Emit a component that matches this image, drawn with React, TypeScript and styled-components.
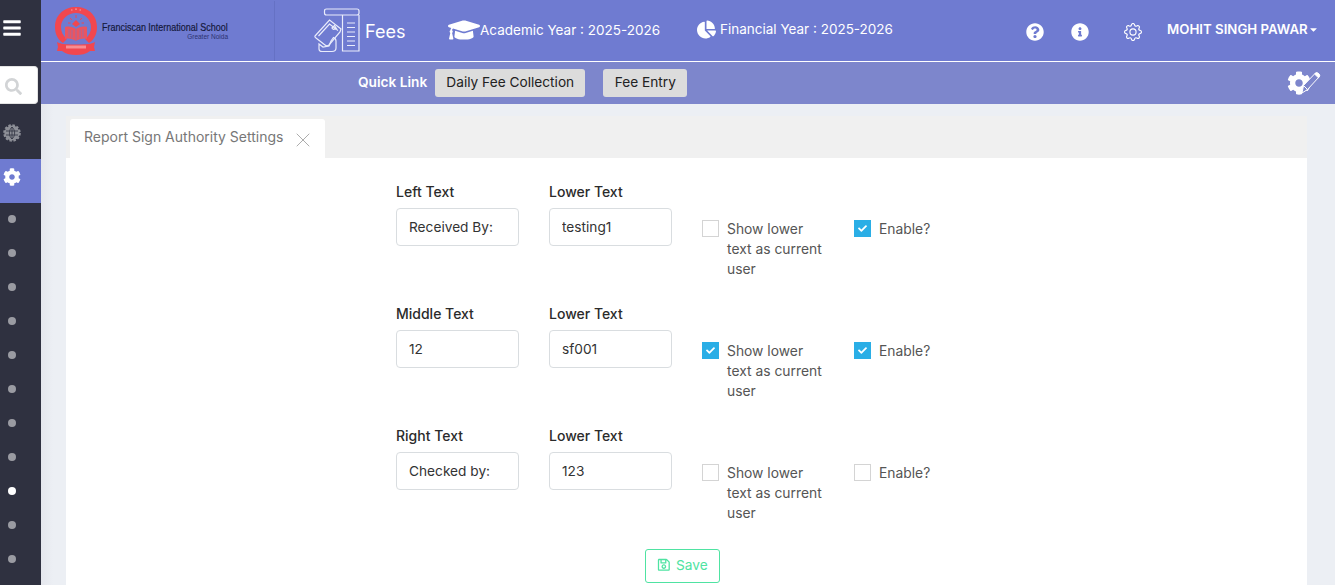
import React from 'react';
import styled, { createGlobalStyle } from 'styled-components';
import { FaBars, FaChartPie, FaCog, FaGraduationCap, FaInfoCircle, FaQuestionCircle, FaRegSave, FaSearch, FaCheck, FaCaretDown } from 'react-icons/fa';
import { BsGear } from 'react-icons/bs';
import { X } from 'lucide-react';

const FONT = `Inter, Roboto, "Liberation Sans", sans-serif`;

const Global = createGlobalStyle`
  html, body { margin: 0; padding: 0; height: 100%; overflow: hidden; background: #eceff4; }
  * { box-sizing: border-box; }
  body { font-family: ${FONT}; font-size: 14px; color: #333; }
`;

const Page = styled.div`display: flex; width: 1335px; height: 585px; overflow: hidden;`;
const Sidebar = styled.aside`width: 41px; flex: none; background: #2f3140; display: flex; flex-direction: column; color: #fff;`;
const Burger = styled.div`height: 56px; padding: 18px 0 0 2px; font-size: 20px; line-height: 0;`;
const SearchBox = styled.div`
  width: 38px; height: 38px; margin-top: 10px; background: #fff; border: 1px solid #e3e3e3; border-left: 0; border-radius: 0 4px 4px 0;
  display: flex; align-items: center; justify-content: center; padding: 3px 10px 0 0; color: #d2d4d6; font-size: 17px;
`;
const NavIcon = styled.div<{ $active?: boolean }>`
  height: 44px; display: flex; align-items: center; padding: 0 0 8px 3px; font-size: 18px;
  background: ${p => (p.$active ? '#6f7bd1' : 'transparent')};
  color: ${p => (p.$active ? '#fff' : '#8d8f97')};
`;
const GlobeSlot = styled(NavIcon)`margin-top: 11px;`;
const DotList = styled.div`display: flex; flex-direction: column; padding: 12px 0 0 8px; gap: 26px;`;
const Dot = styled.span<{ $active?: boolean }>`width: 8px; height: 8px; border-radius: 50%; background: ${p => (p.$active ? '#fff' : '#9a9ba2')};`;

const Main = styled.div`flex: 1; min-width: 0; display: flex; flex-direction: column; background: linear-gradient(90deg, #e5e7ed 0, #eceff4 12px);`;
const Header = styled.header`height: 61px; flex: none; background: #6f7bd1; display: flex; align-items: center; color: #fff;`;
const Brand = styled.div`width: 234px; height: 60px; flex: none; border-right: 1px solid #6571c4; display: flex; align-items: center; padding: 0 0 0 13px; gap: 4px;`;
const BrandText = styled.div`display: flex; flex-direction: column; align-items: flex-end; width: 126px; color: #14183a; padding-top: 1px; overflow: visible;`;
const BrandName = styled.span`display: block; width: 126px; font-family: "Liberation Sans", sans-serif; font-size: 11.5px; line-height: 12px; font-weight: 400; -webkit-text-stroke: .2px #14183a; white-space: nowrap; transform: scaleX(.78); transform-origin: left center;`;
const BrandSub = styled.span`font-family: "Liberation Sans", sans-serif; font-size: 6.5px; line-height: 8px; color: #2c3270; white-space: nowrap;`;
const Module = styled.div`display: flex; align-items: center; margin-left: 39px; gap: 5px; font-size: 18px; font-weight: 400; width: 134px; flex: none; padding-top: 1px;`;
const YearItem = styled.div<{ $w: number }>`display: flex; align-items: center; flex: none; width: ${p => p.$w}px; font-size: 13.5px; white-space: nowrap;`;
const CapIcon = styled.span`display: flex; font-size: 32px; margin-top: -1px;`;
const PieIcon = styled.span`display: flex; font-size: 19px; margin-right: 4px; margin-top: -2px;`;
const YearLabel = styled.span<{ $up?: boolean }>`position: relative; top: ${p => (p.$up ? '-2px' : '-1px')};`;
const HeaderIcons = styled.div`display: flex; align-items: center; margin-left: 133px; font-size: 18px;`;
const HeaderIcon = styled.span<{ $gap: number }>`display: flex; margin-right: ${p => p.$gap}px; margin-top: 2px;`;
const UserName = styled.div`display: flex; align-items: center; font-weight: 600; font-size: 13.25px; white-space: nowrap; margin-top: -3px;`;

const SubBar = styled.div`height: 43px; flex: none; border-top: 1px solid #fff; background: #7d86cc; display: flex; align-items: center; padding-left: 317px; position: relative; color: #fff;`;
const QuickLabel = styled.span`font-weight: 600; font-size: 13.7px; margin-right: 8px; white-space: nowrap; padding-bottom: 3px;`;
const QuickButton = styled.button<{ $w: number }>`height: 28px; border: 0; background: #dcdcdc; border-radius: 3px; font: 400 13.7px ${FONT}; color: #222; margin-right: 18px; padding: 0 0 3px; width: ${p => p.$w}px;`;
const BarTool = styled.span`margin-left: auto; margin-right: 14px; width: 34px; height: 26px; position: relative; display: block;`;
const ToolGear = styled.span`position: absolute; left: 0; top: 1px; font-size: 24px; display: flex;`;
const ToolPen = styled.span`position: absolute; left: 13px; top: 1px; display: flex;`;

const Content = styled.div`flex: 1; padding: 12px 28px 0 25px; min-height: 0;`;
const TabStrip = styled.div`height: 42px; background: #f0f0f0; padding: 3px 0 0 4px; display: flex; align-items: flex-end;`;
const Tab = styled.div`width: 255px; height: 39px; background: #fff; border-radius: 3px 3px 0 0; display: flex; align-items: center; padding: 0 10px 4px 14px; color: #777; font-size: 14px; justify-content: space-between; white-space: nowrap;`;
const TabClose = styled.span`display: flex; color: #888; margin-top: 6px;`;
const Panel = styled.div`background: #fff; height: 427px; padding: 26px 0 0 330px;`;
const FormRow = styled.div`display: grid; grid-template-columns: 123px 123px 122px 100px; column-gap: 30px; height: 122px;`;
const Field = styled.div`display: flex; flex-direction: column;`;
const FieldLabel = styled.label`font-weight: 500; font-size: 14px; line-height: 16px; color: #2b2b2b; margin-bottom: 8px;`;
const TextBox = styled.input`width: 123px; height: 38px; border: 1px solid #d9dde0; border-radius: 4px; padding: 0 12px 0; font: 400 13.7px ${FONT}; color: #333; outline: 0; background: #fff;`;
const CheckField = styled.div`display: flex; align-items: flex-start; padding-top: 35px; gap: 8px; color: #555; font-size: 13.85px; line-height: 20px;`;
const Box = styled.span<{ $on?: boolean }>`
  width: 17px; height: 17px; flex: none; margin-top: 1px; display: flex; align-items: center; justify-content: center; color: #fff; font-size: 9px;
  background: ${p => (p.$on ? '#2aaee6' : '#fff')}; border: 1px solid ${p => (p.$on ? '#2aaee6' : '#d4d4d4')};
`;
const Actions = styled.div`margin: -1px 0 0 249px;`;
const SaveButton = styled.button`width: 75px; height: 34px; background: #fff; border: 1px solid #4fe3a2; border-radius: 3px; color: #4fe3a2; font: 400 13.7px ${FONT}; display: flex; align-items: center; justify-content: center; gap: 5px; padding: 0 0 3px;`;

const Logo = () => (
  <svg width="44" height="50" viewBox="0 0 44 50" fill="none" aria-hidden>
    <path d="M9 37 C3 33 1 27 1 21 C1 9 10 1 22 1 C34 1 43 9 43 21 C43 27 41 33 35 37 L31 33 C35 30 37 26 37 21 C37 13 30 7 22 7 C14 7 7 13 7 21 C7 26 9 30 13 33 Z" fill="#f2474f" />
    <path d="M5 37 C10 39 34 39 39 37 L41 36 L40 41 L41 45 H36 C32 48 27 49 22 49 C17 49 12 48 8 45 H3 L4 41 L3 36 Z" fill="#f2474f" />
    <rect x="12" y="39.5" width="20" height="3" fill="#f78e92" />
    <path d="M11 21 C15 20 19 21 22 23 C25 21 29 20 33 21 V33 C29 32 25 33 22 35 C19 33 15 32 11 33 Z" fill="#ea5560" />
    <path d="M22 23 V35 M15 23 V31 M18 24 V32 M26 24 V32 M29 23 V31" stroke="#8e6fb4" strokeWidth=".8" />
    <path d="M22 21 L26 18 L22 14 L18 18 Z" fill="#f2474f" />
    <path d="M22 9 V12 M16 12 L18 14 M28 12 L26 14 M14 17 H16.5 M30 17 H27.5" stroke="#f2474f" strokeWidth="1" />
    <path d="M17 4 h1.5 M21.2 3.2 h1.6 M25.5 4 h1.5" stroke="#f7a0a4" strokeWidth="1.2" />
  </svg>
);

const FeesIcon = () => (
  <svg width="46" height="46" viewBox="0 0 46 46" fill="none" stroke="#e9ecfb" strokeWidth="1.2" aria-hidden>
    <path d="M12.5 1 H43 Q45 1 45 3 V5 Q45 7 43 7 H12.5 Q10.5 7 10.5 5 V3 Q10.5 1 12.5 1 Z" />
    <path d="M28.5 7 V43 H45 V7" />
    <path d="M33 15 H41 M33 19.5 H41 M33 24 H41 M33 28.5 H41 M33 33 H41 M33 37.5 H41" />
    <path d="M1 28 L15.5 12 L27 21 L26 24 L15 37 Q13 38.5 11 37 L2 30 Q0.5 29 1 28 Z" />
    <path d="M4.5 28 L15.5 16 L24 22.5 M18 20 l2.5 -2.5 l2 3.2 l-3.2 .6 z" />
    <path d="M5 36 V41 Q5 43.5 8 43.5 H18 Q22 43.5 22 40 V33 Q22 30.5 19.5 29.5 L17 33 L15 38 L9 39 Z" />
  </svg>
);

const GlobeGear = () => (
  <svg width="18" height="18" viewBox="0 0 18 18" aria-hidden>
    <circle cx="9" cy="9" r="7.6" fill="#8d8f97" stroke="#8d8f97" strokeWidth="2.4" strokeDasharray="2.4 1.6" />
    <circle cx="9" cy="9" r="6.3" fill="#8d8f97" />
    <path d="M3 7 H15 M3 11 H15 M9 3 V15 M9 3 C5.5 6 5.5 12 9 15 M9 3 C12.5 6 12.5 12 9 15" stroke="#2f3140" strokeWidth=".8" fill="none" />
  </svg>
);

const PenOutline = () => (
  <svg width="21" height="24" viewBox="0 0 21 24" aria-hidden>
    <path d="M3.5 14.5 L15 2.5 Q16.5 1 18.5 2.5 Q20.5 4.5 19 6 L7.5 18.5 L2 22 Z" fill="#7d86cc" stroke="#fff" strokeWidth="1" strokeLinejoin="round" />
    <path d="M14.5 3 L15 2.5 Q16.5 1 18.5 2.5 Q20.5 4.5 19 6 L18.5 6.8 Z" fill="#fff" stroke="#fff" strokeWidth="1" />
    <path d="M3.5 14.5 L7.5 18.5" stroke="#fff" strokeWidth="1" />
  </svg>
);

type RowData = { label: string; value: string; lower: string; show: boolean; enable: boolean };
const rows: RowData[] = [
  { label: 'Left Text', value: 'Received By:', lower: 'testing1', show: false, enable: true },
  { label: 'Middle Text', value: '12', lower: 'sf001', show: true, enable: true },
  { label: 'Right Text', value: 'Checked by:', lower: '123', show: false, enable: false },
];

const Check = ({ on }: { on: boolean }) => <Box $on={on}>{on && <FaCheck />}</Box>;

export default function App() {
  return (
    <Page>
      <Global />
      <Sidebar>
        <Burger><FaBars /></Burger>
        <SearchBox><FaSearch /></SearchBox>
        <GlobeSlot><GlobeGear /></GlobeSlot>
        <NavIcon $active><FaCog /></NavIcon>
        <DotList>
          {Array.from({ length: 11 }, (_, i) => <Dot key={i} $active={i === 8} />)}
        </DotList>
      </Sidebar>
      <Main>
        <Header>
          <Brand>
            <Logo />
            <BrandText>
              <BrandName>Franciscan International School</BrandName>
              <BrandSub>Greater Noida</BrandSub>
            </BrandText>
          </Brand>
          <Module><FeesIcon />Fees</Module>
          <YearItem $w={249}><CapIcon><FaGraduationCap /></CapIcon><YearLabel>Academic Year : 2025-2026</YearLabel></YearItem>
          <YearItem $w={196}><PieIcon><FaChartPie /></PieIcon><YearLabel $up>Financial Year : 2025-2026</YearLabel></YearItem>
          <HeaderIcons>
            <HeaderIcon $gap={27}><FaQuestionCircle /></HeaderIcon>
            <HeaderIcon $gap={35}><FaInfoCircle /></HeaderIcon>
            <HeaderIcon $gap={25}><BsGear size={18} /></HeaderIcon>
          </HeaderIcons>
          <UserName>MOHIT SINGH PAWAR<FaCaretDown size={11} /></UserName>
        </Header>
        <SubBar>
          <QuickLabel>Quick Link</QuickLabel>
          <QuickButton $w={150}>Daily Fee Collection</QuickButton>
          <QuickButton $w={84}>Fee Entry</QuickButton>
          <BarTool>
            <ToolGear><FaCog /></ToolGear>
            <ToolPen><PenOutline /></ToolPen>
          </BarTool>
        </SubBar>
        <Content>
          <TabStrip>
            <Tab>Report Sign Authority Settings<TabClose><X size={24} strokeWidth={0.7} /></TabClose></Tab>
          </TabStrip>
          <Panel>
            {rows.map(r => (
              <FormRow key={r.label}>
                <Field>
                  <FieldLabel>{r.label}</FieldLabel>
                  <TextBox defaultValue={r.value} />
                </Field>
                <Field>
                  <FieldLabel>Lower Text</FieldLabel>
                  <TextBox defaultValue={r.lower} />
                </Field>
                <CheckField><Check on={r.show} /><span>Show lower text as current user</span></CheckField>
                <CheckField><Check on={r.enable} /><span>Enable?</span></CheckField>
              </FormRow>
            ))}
            <Actions><SaveButton><FaRegSave />Save</SaveButton></Actions>
          </Panel>
        </Content>
      </Main>
    </Page>
  );
}
